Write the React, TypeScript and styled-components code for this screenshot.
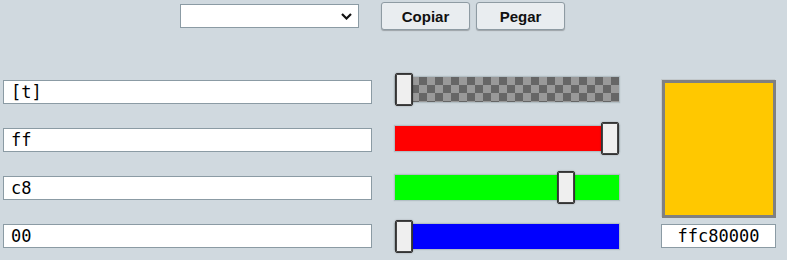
import React from "react";
import styled, { createGlobalStyle } from "styled-components";

const GlobalStyle = createGlobalStyle`
  html, body {
    margin: 0;
    padding: 0;
    background: #d0d9df;
    font-family: "Liberation Sans", Arial, sans-serif;
  }
`;

const Page = styled.div`
  width: 787px;
  height: 260px;
  background: #d0d9df;
  overflow: hidden;
`;

const Toolbar = styled.div`
  display: flex;
  align-items: center;
  padding: 2px 0 0 180px;
  height: 28px;
`;

const SelectBox = styled.div`
  position: relative;
  box-sizing: border-box;
  width: 179px;
  height: 24px;
  background: #fff;
  border: 1px solid #8b9ba4;
  margin-right: 22px;

  svg {
    position: absolute;
    right: 6px;
    top: 8px;
  }
`;

const Button = styled.button`
  box-sizing: border-box;
  width: 89px;
  height: 28px;
  margin-right: 6px;
  background: #e9edf0;
  border: 1px solid #8e9ba3;
  border-radius: 3px;
  box-shadow: 0 1px 1px rgba(0, 0, 0, 0.25);
  font-family: "Liberation Sans", Arial, sans-serif;
  font-weight: bold;
  font-size: 15px;
  color: #111;
  padding: 0;
`;

const Main = styled.div`
  display: flex;
  align-items: flex-start;
  margin-top: 50px;
`;

const FieldColumn = styled.div`
  display: flex;
  flex-direction: column;
  gap: 24px;
  margin-left: 3px;
  width: 369px;
`;

const Field = styled.div<{ $center?: boolean }>`
  box-sizing: border-box;
  height: 24px;
  width: 100%;
  background: #fff;
  border: 1px solid #8b9ba4;
  padding: 0 7px;
  display: flex;
  align-items: center;
  justify-content: ${(p) => (p.$center ? "center" : "flex-start")};
  font-family: "DejaVu Sans Mono", "Liberation Mono", monospace;
  font-size: 17px;
  color: #000;
`;

const SliderColumn = styled.div`
  display: flex;
  flex-direction: column;
  gap: 24px;
  margin: -3px 0 0 23px;
  width: 224px;
`;

const Track = styled.div<{ $fill: string }>`
  position: relative;
  height: 25px;
  background: ${(p) => p.$fill};
  box-shadow: 0 0 1px 1px rgba(150, 165, 172, 0.5);
`;

const CheckerTrack = styled(Track)`
  background-color: #999;
  background-image:
    linear-gradient(45deg, #666 25%, transparent 25%, transparent 75%, #666 75%),
    linear-gradient(45deg, #666 25%, transparent 25%, transparent 75%, #666 75%);
  background-size: 16px 16px;
  background-position: 0 0, 8px 8px;
`;

const Thumb = styled.div`
  position: absolute;
  top: -4px;
  box-sizing: border-box;
  width: 18px;
  height: 33px;
  background: #efefef;
  border: 1px solid #333;
  box-shadow: inset 0 0 0 1px #444, 0 0 2px rgba(0, 0, 0, 0.25);
  border-radius: 2px;
`;

const PreviewColumn = styled.div`
  display: flex;
  flex-direction: column;
  gap: 6px;
  margin-left: 42px;
  width: 115px;
`;

const Swatch = styled.div<{ $color: string }>`
  box-sizing: border-box;
  margin-left: 1px;
  width: 114px;
  height: 138px;
  background: ${(p) => p.$color};
  border: 3px solid #808080;
  box-shadow: -1px -1px 0 #c3c9cc;
`;

const channels = [
  { label: "[t]", value: 0, fill: "checker" },
  { label: "ff", value: 255, fill: "#ff0000" },
  { label: "c8", value: 200, fill: "#00ff00" },
  { label: "00", value: 0, fill: "#0000ff" },
];

const thumbLeft = (v: number) => Math.round((v / 255) * (224 - 18));

const App: React.FC = () => {
  return (
    <Page>
      <GlobalStyle />
      <Toolbar>
        <SelectBox>
          <svg width="11" height="7" viewBox="0 0 11 7">
            <polyline
              points="1,1 5.5,5.5 10,1"
              fill="none"
              stroke="#111"
              strokeWidth="2.2"
            />
          </svg>
        </SelectBox>
        <Button>Copiar</Button>
        <Button>Pegar</Button>
      </Toolbar>
      <Main>
        <FieldColumn>
          {channels.map((c) => (
            <Field key={c.label}>{c.label}</Field>
          ))}
        </FieldColumn>
        <SliderColumn>
          {channels.map((c) => {
            const thumb = <Thumb style={{ left: thumbLeft(c.value) }} />;
            return c.fill === "checker" ? (
              <CheckerTrack key={c.label} $fill="">
                {thumb}
              </CheckerTrack>
            ) : (
              <Track key={c.label} $fill={c.fill}>
                {thumb}
              </Track>
            );
          })}
        </SliderColumn>
        <PreviewColumn>
          <Swatch $color="#ffc800" />
          <Field $center>ffc80000</Field>
        </PreviewColumn>
      </Main>
    </Page>
  );
};

export default App;
